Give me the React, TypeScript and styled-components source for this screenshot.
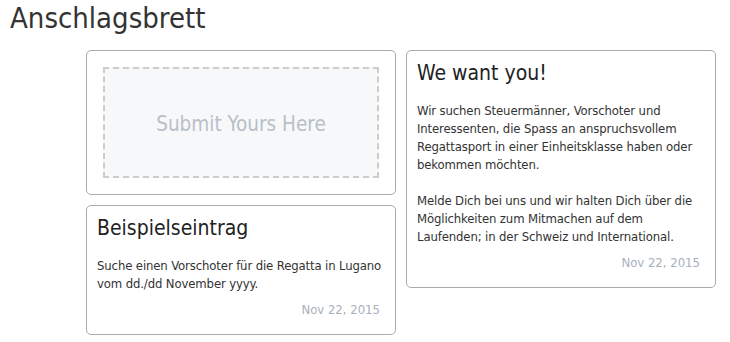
import React from "react";
import styled, { createGlobalStyle } from "styled-components";

const GlobalStyle = createGlobalStyle`
  body {
    margin: 0;
    background: #ffffff;
    font-family: "DejaVu Sans Condensed", "DejaVu Sans", sans-serif;
    font-stretch: condensed;
    color: #333333;
  }
`;

const Page = styled.div`
  padding: 0 10px;
`;

const Heading = styled.h1`
  margin: 0;
  padding-top: 1px;
  font-size: 29px;
  font-weight: normal;
  color: #333333;
  line-height: 34px;
`;

const Board = styled.div`
  display: grid;
  grid-template-columns: 310px 310px;
  column-gap: 10px;
  margin: 15px 0 0 76px;
  align-items: start;
`;

const Column = styled.div`
  display: flex;
  flex-direction: column;
  gap: 10px;
`;

const Card = styled.div<{ $pad?: string }>`
  border: 1px solid #aaaaaa;
  border-radius: 5px;
  padding: ${(p) => p.$pad ?? "9px 10px 15px"};
  background: #ffffff;
`;

const Dropzone = styled.div`
  height: 111px;
  box-sizing: border-box;
  border: 2px dashed #cccccc;
  background: #f7f8fa;
  display: flex;
  align-items: center;
  justify-content: center;
  padding-top: 2px;
  color: #b8bfc7;
  font-size: 20.5px;
`;

const Title = styled.h2`
  margin: 0;
  font-size: 21px;
  font-weight: normal;
  line-height: 26px;
  color: #222222;
`;

const Body = styled.p`
  margin: 16px 0 0;
  font-size: 13px;
  line-height: 18px;
  letter-spacing: -0.13px;
  color: #333333;
`;

const Stamp = styled.div`
  text-align: right;
  margin-top: 8px;
  padding-right: 5px;
  font-size: 13px;
  line-height: 18px;
  color: #a7b0bd;
`;

export default function App() {
  return (
    <>
      <GlobalStyle />
      <Page>
        <Heading>Anschlagsbrett</Heading>
        <Board>
          <Column>
            <Card $pad="16px">
              <Dropzone>Submit Yours Here</Dropzone>
            </Card>
            <Card>
              <Title>Beispielseintrag</Title>
              <Body>
                Suche einen Vorschoter für die Regatta in Lugano vom dd./dd
                November yyyy.
              </Body>
              <Stamp>Nov 22, 2015</Stamp>
            </Card>
          </Column>
          <Column>
            <Card>
              <Title>We want you!</Title>
              <Body>
                Wir suchen Steuermänner, Vorschoter und Interessenten, die
                Spass an anspruchsvollem Regattasport in einer Einheitsklasse
                haben oder bekommen möchten.
                <br />
                <br />
                Melde Dich bei uns und wir halten Dich über die Möglichkeiten
                zum Mitmachen auf dem Laufenden; in der Schweiz und
                International.
              </Body>
              <Stamp>Nov 22, 2015</Stamp>
            </Card>
          </Column>
        </Board>
      </Page>
    </>
  );
}
